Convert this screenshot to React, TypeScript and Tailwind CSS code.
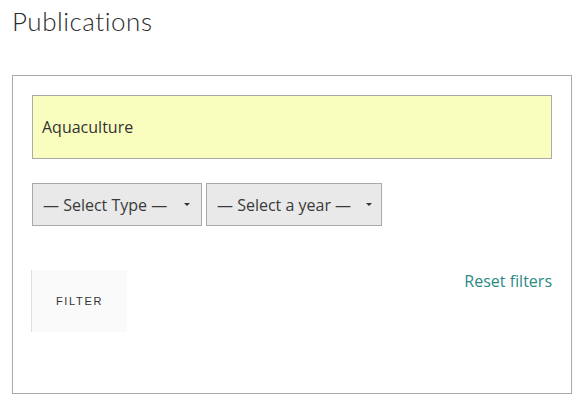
import type React from "react";

const Caret: React.FC = () => (
  <span className="ml-auto inline-block border-x-[3px] border-t-[3px] border-x-transparent border-t-[#333]" />
);

const App: React.FC = () => {
  return (
    <div className="w-[584px] h-[404px] bg-white px-3 pt-[5px] font-['Open_Sans',sans-serif] text-[#333]">
      <h1 className="text-[26px] leading-[32px] font-['Lato',sans-serif] font-light tracking-[0.02em] text-[#2b2b2b] h-[70px]">
        Publications
      </h1>

      <div className="w-[560px] h-[319px] border border-[#aaa] px-[19px] pt-[19px]">
        <div className="h-[64px] border border-[#aaa] bg-[#f9fdbe] flex items-center px-[9px] text-[16px]">
          Aquaculture
        </div>

        <div className="flex gap-1 mt-6">
          <div className="w-[170px] h-[43px] border border-[#aaa] bg-[#e9e9e9] flex items-center pl-[10px] pr-[11px] text-[16px] text-[#3a3a3a]">
            — Select Type —
            <Caret />
          </div>
          <div className="w-[176px] h-[43px] border border-[#aaa] bg-[#e9e9e9] flex items-center pl-[10px] pr-[9px] text-[16px] text-[#3a3a3a]">
            — Select a year —
            <Caret />
          </div>
        </div>

        <div className="flex items-start justify-between mt-[44px]">
          <button className="-ml-px w-[96px] h-[62px] bg-[#fafafa] border-l border-[#dcdfe3] text-[11px] tracking-[0.15em] text-[#333] font-['Liberation_Sans',sans-serif]">
            FILTER
          </button>
          <a className="text-[16px] text-[#2c8a85] leading-[22px]">Reset filters</a>
        </div>
      </div>
    </div>
  );
};

export default App;
